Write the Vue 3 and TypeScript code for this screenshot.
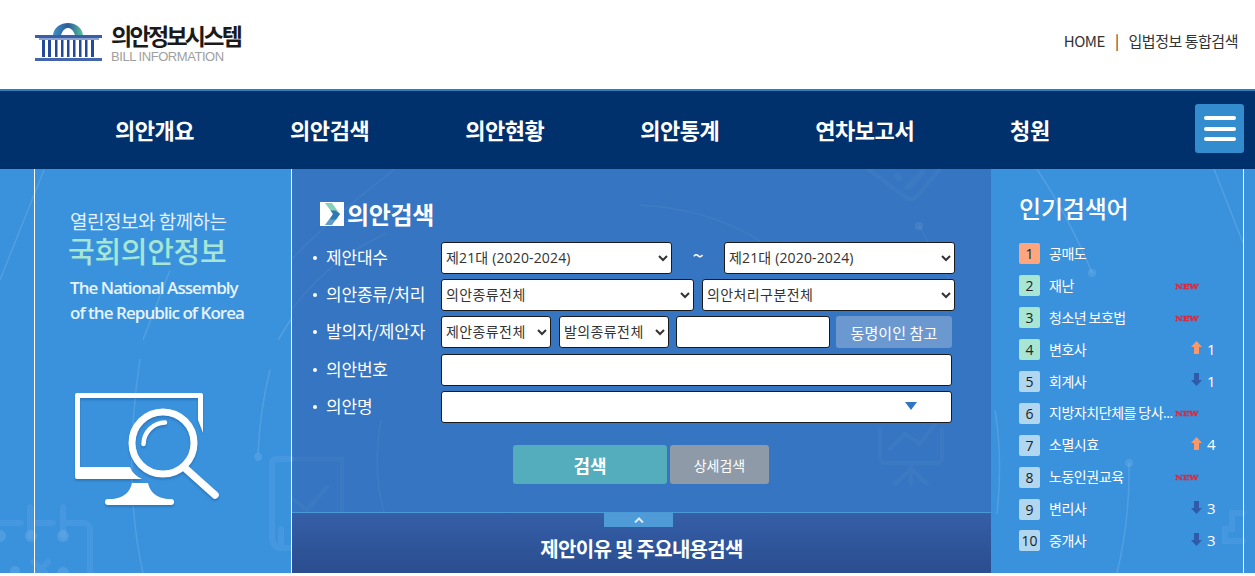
<script setup lang="ts">
const navItems: string[] = ['의안개요', '의안검색', '의안현황', '의안통계', '연차보고서', '청원']
const opt = '제21대 (2020-2024)'
type Rank = { name: string; tone: string; kind: 'new' | 'up' | 'down' | 'none'; delta?: number }
const ranks: Rank[] = [
  { name: '공매도', tone: 'orange', kind: 'none' },
  { name: '재난', tone: 'mint', kind: 'new' },
  { name: '청소년 보호법', tone: 'mint', kind: 'new' },
  { name: '변호사', tone: 'mint', kind: 'up', delta: 1 },
  { name: '회계사', tone: 'sky', kind: 'down', delta: 1 },
  { name: '지방자치단체를 당사...', tone: 'sky', kind: 'new' },
  { name: '소멸시효', tone: 'sky', kind: 'up', delta: 4 },
  { name: '노동인권교육', tone: 'sky', kind: 'new' },
  { name: '변리사', tone: 'sky', kind: 'down', delta: 3 },
  { name: '중개사', tone: 'sky', kind: 'down', delta: 3 }
]
</script>

<template>
  <div class="page">
    <header class="top">
      <div class="logo">
        <svg class="logo-mark" viewBox="0 0 68 38" width="68" height="38">
          <defs>
            <linearGradient id="dome" x1="0" x2="1" y1="0" y2="0">
              <stop offset="0" stop-color="#3f8fc0" />
              <stop offset="0.5" stop-color="#2a5c9a" />
              <stop offset="1" stop-color="#59c29a" />
            </linearGradient>
          </defs>
          <path d="M18 12C19 4 26 0 33 0s14 4 15 12H40C38 7 36 5 33 5s-5 2-7 7Z" fill="url(#dome)" />
          <rect x="0" y="12" width="67" height="3" fill="#3a5da8" />
          <path d="M7 17h3v17H7zM13 17h3v17h-3zM20 17h2.500v17H20zM26 17h2.500v17H26zM32 17h2.500v17H32zM38 17h2.500v17H38zM44 17h2.500v17H44zM50 17h2.500v17H50zM56 17h3v17h-3z" fill="#24489a" />
          <rect x="4" y="15" width="60" height="2" fill="#8da3cf" />
          <rect x="0" y="35" width="67" height="3" fill="#4464ac" />
        </svg>
        <div class="logo-text">
          <strong>의안정보시스템</strong>
          <span>BILL INFORMATION</span>
        </div>
      </div>
      <div class="util">
        <span>HOME</span>
        <i>|</i>
        <span>입법정보 통합검색</span>
      </div>
    </header>

    <nav class="nav">
      <a v-for="n in navItems" :key="n">{{ n }}</a>
      <button class="burger" type="button" aria-label="menu"><b></b><b></b><b></b></button>
    </nav>

    <main class="main">
      <svg class="decor" viewBox="0 0 1255 404" width="1255" height="404" fill="none" stroke="#fff">
        <g stroke-opacity="0.12" stroke-width="1.500">
          <path d="M44 1 0 111M170 101 143 171M291 150 278 171" />
          <path d="M1037 0Q1070 50 1092 104M1214 0 1243 74" />
          <path d="M140 190Q122 310 143 404M270 201Q260 240 258 285" />
          <path d="M1129 294Q1130 350 1117 404M995 241Q1003 290 997 345" />
        </g>
        <g fill="#fff" fill-opacity="0.1" stroke="none">
          <circle cx="1092" cy="104" r="4" />
          <circle cx="1129" cy="294" r="4" />
          <circle cx="258" cy="288" r="4" />
          <circle cx="31" cy="367" r="6" />
          <circle cx="63" cy="367" r="6" />
          <circle cx="0" cy="367" r="6" />
          <circle cx="15" cy="402" r="5" />
          <circle cx="63" cy="404" r="6" />
        </g>
        <g stroke-opacity="0.06" stroke-width="6" stroke-linecap="round">
          <path d="M0 354H21M36 354H53M63 338V367M30 338V367M63 354H84a6 6 0 0 1 6 6V404" />
          <path d="M33 393 45 403M48 393 38 403" />
          <path d="M291 290H276a4 4 0 0 0-4 4V370a9 9 0 0 0 9 9H291M281 379V360" />
          <path d="M1243 344H1232V360H1225V372H1243" />
        </g>
        <g stroke-opacity="0.05" stroke-width="1.500">
          <path d="M395 0Q330 50 292 90M385 65Q330 90 292 140" />
          <path d="M640 36Q710 40 760 72" />
          <path d="M919 57 955 121" />
          <path d="M381 251Q372 300 384 343" />
        </g>
        <circle cx="919" cy="57" r="4" fill="#fff" fill-opacity="0.08" stroke="none" />
        <g stroke-opacity="0.035" stroke-width="4" stroke-linecap="round">
          <path d="M868 0 905 28Q912 33 917 27L940 0" />
          <path d="M908 18 922 4M897 7 899 9" stroke-width="6" />
          <path d="M292 290H342V343M292 329 307 341 327 318" />
          <path d="M880 260V288a6 6 0 0 0 6 6H936a6 6 0 0 0 6-6V260M890 280 905 265 920 275 935 255M911 294V315M911 300 895 315M911 300 927 315" />
        </g>
      </svg>

      <section class="intro">
        <p class="intro-a">열린정보와 함께하는</p>
        <p class="intro-b">국회의안정보</p>
        <p class="intro-c">The National Assembly<br />of the Republic of Korea</p>
        <svg class="monitor" viewBox="0 0 150 118" width="150" height="118">
          <g fill="#fff">
            <path d="M2 0H126Q128 0 128 2V40L123 27V5H5V74H55Q58 82 67 86H2Q0 86 0 84V2Q0 0 2 0Z" />
            <path d="M57 90H73Q76 104 92 106H96a3 3 0 0 1 0 6H33a3 3 0 0 1 0-6H38Q54 104 57 90Z" />
          </g>
          <g fill="none" stroke="#fff" stroke-linecap="round">
            <circle cx="88" cy="50" r="31" stroke-width="7" />
            <path d="M68.500 51A22 22 0 0 1 90 29.500" stroke-width="4.500" />
            <path d="M111 76 140 102" stroke-width="7.500" />
          </g>
        </svg>
      </section>

      <section class="search">
        <div class="search-body">
          <h2 class="search-title">
            <svg viewBox="0 0 24 24" width="24" height="24">
              <rect width="24" height="24" fill="#fff" />
              <path d="M5 1H12L20 12H13Z" fill="#86d2b8" />
              <path d="M20 12 12 23H5L13 12Z" fill="#5f9cc9" />
              <path d="M20 12 16 17.500H10L13 12 10.500 8.500H15.500Z" fill="#2f78b4" />
            </svg>
            <span>의안검색</span>
          </h2>
          <div class="row">
            <label>제안대수</label>
            <select class="f-232"><option>{{ opt }}</option></select>
            <span class="tilde">~</span>
            <select class="f-232"><option>{{ opt }}</option></select>
          </div>
          <div class="row">
            <label>의안종류/처리</label>
            <select class="f-253"><option>의안종류전체</option></select>
            <select class="f-253 gap8"><option>의안처리구분전체</option></select>
          </div>
          <div class="row row-wide">
            <label>발의자/제안자</label>
            <select class="f-110"><option>제안종류전체</option></select>
            <select class="f-110 gap8"><option>발의종류전체</option></select>
            <input class="f-154" type="text" />
            <button class="namesake" type="button">동명이인 참고</button>
          </div>
          <div class="row">
            <label>의안번호</label>
            <input class="f-511" type="text" />
          </div>
          <div class="row">
            <label>의안명</label>
            <div class="combo">
              <input class="f-511" type="text" />
              <em class="caret"></em>
            </div>
          </div>
          <div class="actions">
            <button class="go" type="button">검색</button>
            <button class="more" type="button">상세검색</button>
          </div>
        </div>
        <div class="reason">
          <span class="tab">
            <svg viewBox="0 0 10 6" width="10" height="6" fill="none" stroke="#dcebf8" stroke-width="2"><path d="M1 5.500 5 1.500 9 5.500" /></svg>
          </span>
          <h3>제안이유 및 주요내용검색</h3>
        </div>
      </section>

      <aside class="popular">
        <h2>인기검색어</h2>
        <ol>
          <li v-for="(r, i) in ranks" :key="r.name">
            <span class="badge" :class="r.tone">{{ i + 1 }}</span>
            <span class="term">{{ r.name }}</span>
            <span v-if="r.kind === 'new'" class="new">NEW</span>
            <span v-else-if="r.kind !== 'none'" class="delta">
              <svg viewBox="0 0 11 13" width="11" height="13">
                <path v-if="r.kind === 'up'" d="M5.500 0 11 6H8V13H3V6H0Z" fill="#f9986b" />
                <path v-else d="M5.500 13 11 7H8V0H3V7H0Z" fill="#2f5ba8" />
              </svg>
              <span>{{ r.delta }}</span>
            </span>
          </li>
        </ol>
      </aside>
    </main>
  </div>
</template>

<style scoped>
.page {
  width: 1255px;
  font-family: "Noto Sans CJK KR", "Open Sans", sans-serif;
  color: #222;
}
.top {
  height: 89px;
  background: #fff;
  display: flex;
  justify-content: space-between;
  padding: 23px 17px 0 35px;
  box-sizing: border-box;
}
.logo {
  display: flex;
  align-items: flex-start;
  gap: 8px;
}
.logo-mark {
  display: block;
}
.logo-text {
  display: flex;
  flex-direction: column;
}
.logo-text strong {
  font-size: 23px;
  line-height: 24px;
  font-weight: 700;
  letter-spacing: -2.700px;
  color: #1a1a1a;
}
.logo-text span {
  font-family: "Liberation Sans", sans-serif;
  font-size: 13px;
  line-height: 15px;
  margin-top: 2px;
  color: #a0a0a0;
  letter-spacing: -0.450px;
}
.util {
  display: flex;
  gap: 10px;
  font-size: 15px;
  line-height: 20px;
  margin-top: 8px;
  letter-spacing: -0.470px;
  color: #333;
}
.util i {
  font-style: normal;
}
.nav {
  height: 76px;
  padding: 0 0 2px 115px;
  border-top: 2px solid #2a80c2;
  background: #00316d;
  display: flex;
  align-items: center;
  gap: 95.900px;
  position: relative;
}
.nav a {
  color: #fff;
  font-size: 22px;
  font-weight: 700;
  letter-spacing: -0.450px;
  line-height: 30px;
}
.burger {
  position: absolute;
  left: 1195px;
  top: 13px;
  width: 49px;
  height: 49px;
  background: #338cce;
  border: 0;
  border-radius: 3px;
  display: flex;
  flex-direction: column;
  align-items: center;
  justify-content: center;
  gap: 6.500px;
  padding: 0;
}
.burger b {
  display: block;
  width: 32px;
  height: 4px;
  border-radius: 2px;
  background: #fff;
}
.main {
  position: relative;
  height: 404px;
  background: #3a92dd;
  display: grid;
  grid-template-columns: 258px 699px 253px;
  padding-left: 34px;
  box-sizing: border-box;
  overflow: hidden;
}
.decor {
  position: absolute;
  left: 0;
  top: 0;
  pointer-events: none;
  z-index: 1;
}
.intro {
  position: relative;
  z-index: 2;
  border-left: 1px solid #fff;
  border-right: 1px solid #fff;
  padding: 40px 0 0 35px;
  color: #fff;
}
.intro p {
  margin: 0;
}
.intro-a {
  font-size: 19px;
  line-height: 24px;
  letter-spacing: -0.500px;
  color: #e2f0fb;
}
.intro-b {
  font-size: 29px;
  line-height: 34px;
  font-weight: 500;
  margin: 0 0 0 -2px !important;
  letter-spacing: -0.300px;
  color: #a5e6d5;
}
.intro-c {
  font-family: "Open Sans", sans-serif;
  font-size: 17px;
  line-height: 25px;
  font-weight: 600;
  margin-top: 8px !important;
  letter-spacing: -0.950px;
  color: #e6f3fd;
}
.monitor {
  display: block;
  margin: 68px 0 0 5px;
  filter: drop-shadow(0 2px 1px rgba(0, 40, 90, 0.25));
}
.search {
  background: #3575c1;
  display: flex;
  flex-direction: column;
}
.search-body {
  position: relative;
  z-index: 2;
  height: 343px;
  padding: 32px 0 0 21px;
  box-sizing: border-box;
}
.search-title {
  margin: 0 0 16px 7px;
  display: flex;
  align-items: center;
  gap: 3px;
  height: 25px;
  font-size: 24px;
  font-weight: 700;
  color: #fff;
  letter-spacing: -0.300px;
}
.search-title svg {
  display: block;
}
.row {
  display: flex;
  align-items: center;
  height: 32px;
  margin-bottom: 5px;
}
.row-wide {
  margin-bottom: 6px;
}
.row label {
  width: 128px;
  padding-left: 13px;
  margin-top: -3px;
  box-sizing: border-box;
  flex: none;
  font-size: 17px;
  color: #fff;
  position: relative;
  letter-spacing: -0.200px;
}
.row label::before {
  content: "";
  position: absolute;
  left: 0;
  top: 50%;
  width: 4px;
  height: 4px;
  margin-top: -1px;
  border-radius: 50%;
  background: #fff;
}
select,
input {
  height: 32px;
  box-sizing: border-box;
  border: 1px solid #1a1a1a;
  border-radius: 3px;
  background: #fff;
  font-family: "Open Sans", "Noto Sans CJK KR", sans-serif;
  font-size: 14px;
  letter-spacing: 0.400px;
  color: #333;
  padding: 0 0 2px;
  flex: none;
  display: block;
}
.f-232 { width: 231px; letter-spacing: 0.150px; }
.f-253 { width: 253px; }
.f-110 { width: 110px; }
.f-154 { width: 154px; margin-left: 7px; }
.f-511 { width: 511px; }
.gap8 { margin-left: 8px; }
.tilde {
  width: 52px;
  text-align: center;
  color: #fff;
  font-size: 20px;
  line-height: 24px;
  margin-top: -7px;
}
.namesake {
  width: 116px;
  height: 32px;
  margin-left: 6px;
  background: #6b99cf;
  border: 0;
  border-radius: 3px;
  color: #fff;
  font-family: inherit;
  font-size: 15px;
  letter-spacing: 0.100px;
  padding: 0;
}
.combo {
  position: relative;
}
.caret {
  position: absolute;
  left: 464px;
  top: 11px;
  width: 0;
  height: 0;
  border-left: 6.500px solid transparent;
  border-right: 6.500px solid transparent;
  border-top: 8px solid #2e76c4;
}
.actions {
  display: flex;
  gap: 3px;
  margin: 22px 0 0 200px;
}
.actions button {
  height: 39px;
  border: 0;
  border-radius: 3px;
  color: #fff;
  font-family: inherit;
  padding: 0;
}
.go {
  width: 154px;
  background: #53adbd;
  font-size: 18px;
  font-weight: 700;
}
.more {
  width: 99px;
  background: #8e9aa8;
  font-size: 14px;
}
.reason {
  position: relative;
  z-index: 2;
  height: 61px;
  box-sizing: border-box;
  border-top: 1px solid #4b9ad8;
  background: linear-gradient(#355fa8, #2a4d8e);
  text-align: center;
}
.tab {
  position: absolute;
  left: 312px;
  top: 0;
  width: 69px;
  height: 14px;
  background: #4e9bd7;
  display: flex;
  align-items: center;
  justify-content: center;
}
.reason h3 {
  margin: 21px 0 0;
  font-size: 20px;
  line-height: 30px;
  font-weight: 700;
  color: #fff;
  letter-spacing: -0.700px;
}
.popular {
  position: relative;
  z-index: 2;
  border-right: 1px solid #fff;
  padding: 21px 0 0 28px;
  color: #fff;
}
.popular h2 {
  margin: 0 0 12px;
  font-size: 24px;
  line-height: 36px;
  font-weight: 500;
  letter-spacing: -0.200px;
}
.popular ol {
  list-style: none;
  margin: 0;
  padding: 0;
}
.popular li {
  height: 31.900px;
  display: flex;
  align-items: center;
  position: relative;
}
.badge {
  width: 21px;
  height: 21px;
  border-radius: 2px;
  flex: none;
  text-align: center;
  font-family: "Open Sans", sans-serif;
  font-size: 14px;
  line-height: 21px;
  color: #222;
}
.badge.orange {
  background: #ffa67f;
}
.badge.mint {
  background: #a8e6d3;
}
.badge.sky {
  background: #b0d6f0;
}
.term {
  margin-left: 9px;
  font-family: "Open Sans", "Noto Sans CJK KR", sans-serif;
  font-size: 14px;
  line-height: 20px;
  white-space: nowrap;
  letter-spacing: -0.450px;
  word-spacing: -1px;
}
.new {
  position: absolute;
  left: 156px;
  top: 11px;
  font-family: "DejaVu Serif", serif;
  font-size: 8px;
  line-height: 10px;
  font-weight: 700;
  color: #e42535;
  -webkit-text-stroke: 0.350px #e42535;
  letter-spacing: 0;
  transform-origin: left center;
  transform: scaleX(1.050);
}
.delta {
  position: absolute;
  left: 172px;
  top: 5px;
  display: flex;
  align-items: center;
  gap: 5px;
  font-family: "Open Sans", sans-serif;
  font-size: 15px;
  line-height: 20px;
}
.delta svg {
  display: block;
  margin-top: -2px;
}
</style>

<style>
html,
body {
  margin: 0;
  background: #fff;
  overflow: hidden;
}
</style>
